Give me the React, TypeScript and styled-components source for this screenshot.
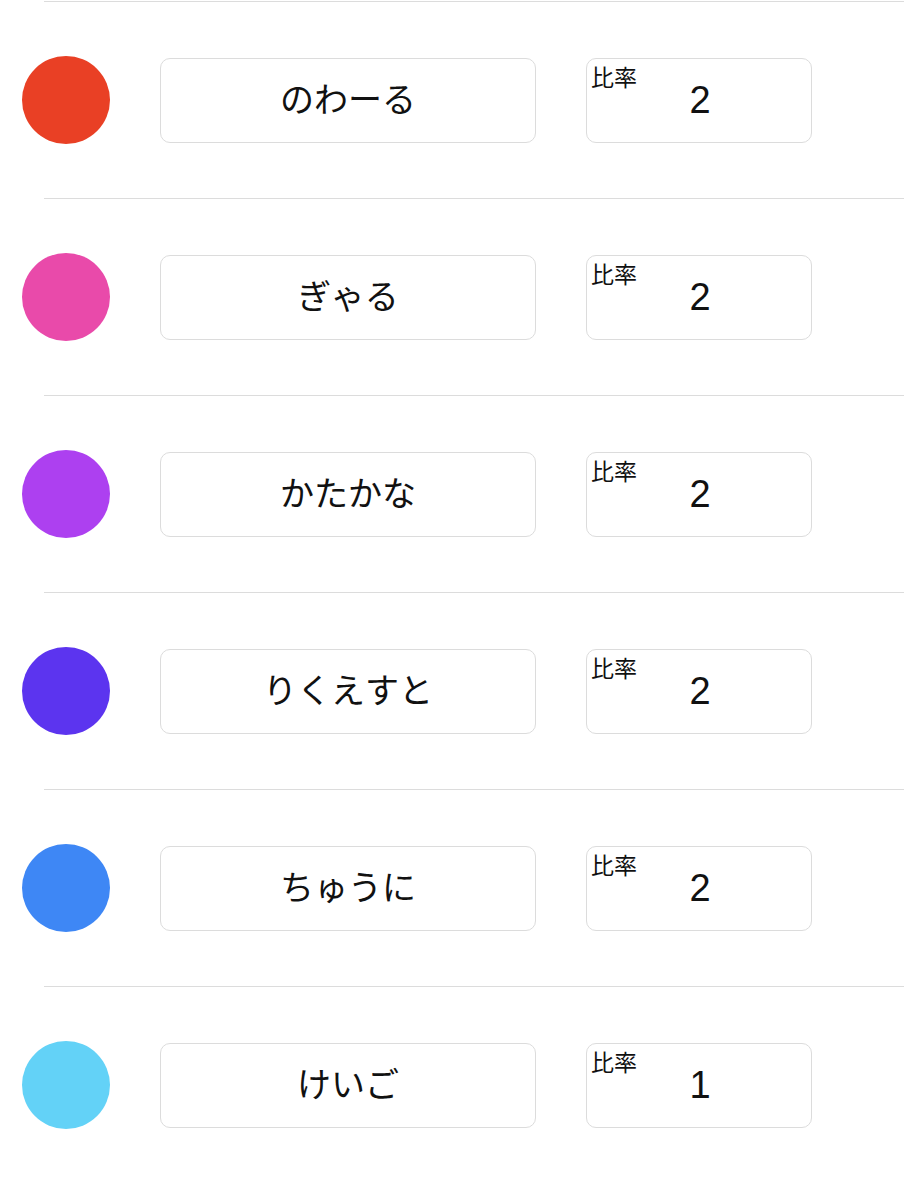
import React from 'react'
import styled, { createGlobalStyle } from 'styled-components'

const GlobalStyle = createGlobalStyle`
  body {
    margin: 0;
    background: #ffffff;
    font-family: "Noto Sans CJK JP", "Noto Sans", sans-serif;
  }
`

const List = styled.div`
  display: flex;
  flex-direction: column;
  padding-top: 1px;
`

const Row = styled.div`
  display: flex;
  flex-direction: column;
`

const Divider = styled.div`
  height: 1px;
  margin-left: 44px;
  background: #dcdcdc;
`

const Body = styled.div`
  align-items: center;
  display: flex;
  height: 196px;
  padding-left: 22px;
`

const Dot = styled.div<{ $color: string }>`
  background: ${({ $color }) => $color};
  border-radius: 50%;
  flex: none;
  height: 88px;
  width: 88px;
`

const NameBox = styled.div`
  align-items: center;
  border: 1px solid #dcdcdc;
  border-radius: 10px;
  box-sizing: border-box;
  color: #111;
  display: flex;
  font-size: 34px;
  height: 85px;
  justify-content: center;
  line-height: 1;
  margin-left: 50px;
  padding-bottom: 4px;
  width: 376px;
`

const RatioBox = styled.div`
  align-items: center;
  border: 1px solid #dcdcdc;
  border-radius: 10px;
  box-sizing: border-box;
  display: flex;
  height: 85px;
  justify-content: center;
  margin-left: 50px;
  position: relative;
  width: 226px;
`

const RatioLabel = styled.span`
  color: #111;
  font-size: 23px;
  left: 4px;
  line-height: 1;
  position: absolute;
  top: 6px;
`

const RatioValue = styled.span`
  color: #111;
  font-family: "Liberation Sans", Arial, sans-serif;
  font-size: 38px;
  line-height: 1;
  margin-left: 2px;
`

const members = [
  { name: 'のわーる', color: '#e94025', ratio: 2 },
  { name: 'ぎゃる', color: '#e94aaa', ratio: 2 },
  { name: 'かたかな', color: '#ad40f0', ratio: 2 },
  { name: 'りくえすと', color: '#5c34ef', ratio: 2 },
  { name: 'ちゅうに', color: '#3e87f5', ratio: 2 },
  { name: 'けいご', color: '#63d2f7', ratio: 1 },
]

export default function App() {
  return (
    <>
      <GlobalStyle />
      <List>
        {members.map((m) => (
          <Row key={m.name}>
            <Divider />
            <Body>
              <Dot $color={m.color} />
              <NameBox>{m.name}</NameBox>
              <RatioBox>
                <RatioLabel>比率</RatioLabel>
                <RatioValue>{m.ratio}</RatioValue>
              </RatioBox>
            </Body>
          </Row>
        ))}
      </List>
    </>
  )
}
